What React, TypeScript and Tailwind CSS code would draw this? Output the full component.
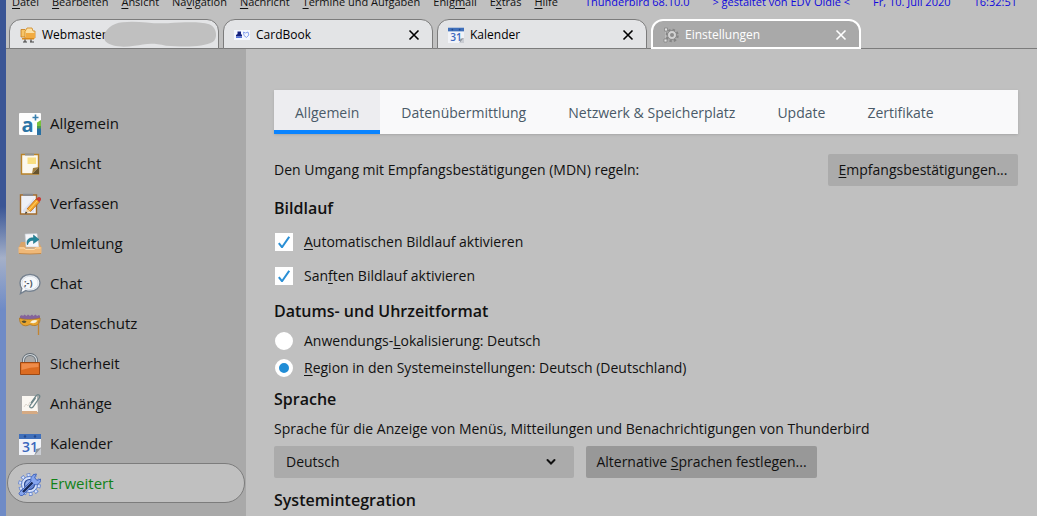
import { useState } from "react";
import type { ReactNode } from "react";

const MailIcon = () => (
  <svg width="16" height="16" viewBox="0 0 16 16">
    <path d="M1 2.500h4l1 1h4V10H1z" fill="#f6c467" stroke="#c77a14" strokeWidth=".8" />
    <path d="M5 4.500 7 1h5l1 3h2v7H5z" fill="#fbe0a4" stroke="#cf8418" strokeWidth=".8" />
    <path d="M6 6h9v5H6z" fill="#f2ab40" />
    <path d="M2 11h12v1.500H2z" fill="#d98a1c" />
    <path d="M5 12.500v2M11 12.500v2M3 15h4M10 15h4" stroke="#444" strokeWidth="1.200" />
  </svg>
);

const CardIcon = () => (
  <svg width="16" height="16" viewBox="0 0 16 16">
    <path d="M0 3h16v10H0z" fill="#f4f7ff" />
    <path d="M2 9.500V8l1.500-1V4.500H7V7l1 1v1.500z" fill="#14207e" />
    <path d="M2 9.500h6V11H2z" fill="#4f6fd8" />
    <path d="m9.500 5 2 1 2.500-1 .8 3-2.300 2.500L10 8.500z" fill="none" stroke="#86a0ee" strokeWidth="1" />
  </svg>
);

const CalendarIcon = ({ size }: { size: number }) => (
  <svg width={size} height={size} viewBox="0 0 22 22">
    <path d="M0 5h22v9l-7 8H0z" fill="#f1f3f8" />
    <path d="M0 1h22v5H0z" fill="#3f6fba" />
    <circle cx="6" cy="3.500" r="1.200" fill="#24498c" />
    <circle cx="16" cy="3.500" r="1.200" fill="#24498c" />
    <text x="3" y="19" fontSize="14" fontWeight="600" fill="#3a67bd" fontFamily="Open Sans, sans-serif">31</text>
    <path d="m22 15-6 7 1-6z" fill="#8d929c" />
    <path d="M22 15v7h-6z" fill="#c9ccd2" />
  </svg>
);

const SmallGearIcon = () => (
  <svg width="16" height="16" viewBox="0 0 16 16">
    <circle cx="9" cy="8.500" r="5.500" fill="none" stroke="#858585" strokeWidth="2.500" strokeDasharray="2.300 2" />
    <circle cx="9" cy="8" r="4.500" fill="#d2d2d2" stroke="#7d7d7d" strokeWidth=".8" />
    <circle cx="9" cy="8" r="2" fill="#8c8c8c" />
    <path d="M1.500 1h3v3h-3zM1 12h3v3H1z" fill="#e2e2e2" stroke="#858585" strokeWidth=".8" />
    <path d="M2.500 5.500v5.500" stroke="#d0d0d0" strokeDasharray="1 1" />
  </svg>
);

const GeneralIcon = () => (
  <svg width="22" height="22" viewBox="0 0 22 22">
    <rect width="22" height="22" rx="1" fill="#fdfdfd" />
    <text x="2.500" y="18.500" fontSize="20" fontWeight="700" fill="#2c74a5" fontFamily="Open Sans, sans-serif">a</text>
    <path d="M16.500 1.500v6M13.500 4.500h6" stroke="#397fae" strokeWidth="1.600" />
    <path d="M18 9.500 22 7v6l-4 2z" fill="#78c13a" />
    <path d="M18 15h4v7h-4z" fill="#2870a3" />
    <path d="M18 13h4v2.500h-4z" fill="#4c9b4c" />
  </svg>
);

const ViewIcon = () => (
  <svg width="22" height="22" viewBox="0 0 22 22">
    <path d="M2.500 1.500h17v19.500h-17z" fill="#fbf8ef" stroke="#b98329" strokeWidth="1.400" />
    <path d="M6 .5h9v2H6z" fill="#8f9396" />
    <path d="M8.500 4.500H17V11H8.500z" fill="#f9df82" />
    <path d="m13 21 1-6 6-1z" fill="#a4803f" />
    <path d="M13 21h7v-7z" fill="#66532d" />
  </svg>
);

const ComposeIcon = () => (
  <svg width="22" height="22" viewBox="0 0 22 22">
    <path d="M1.500 2h16v19h-16z" fill="#eef0f7" stroke="#a36c2c" strokeWidth="1.400" />
    <path d="M4 .8h10v2H4z" fill="#858a94" />
    <path d="M4 17 15 5v14H4z" fill="#dde1f0" />
    <path d="m8 16 9-10 3.500 3-9 9.500z" fill="#f5a62a" stroke="#ba6614" strokeWidth=".8" />
    <path d="m9.500 17.500 9-10" stroke="#ffd46e" strokeWidth="1" />
    <path d="m17 6 2-1.800q1.500-.8 2.600.6t.2 2.400L20.500 9z" fill="#c93b35" />
    <path d="m8 16-2 4.500 5.500-2z" fill="#f2d3a2" />
    <path d="m6.800 18.500-.8 2.200 2.300-.8z" fill="#1d1d1d" />
  </svg>
);

const RedirectIcon = () => (
  <svg width="24" height="22" viewBox="0 0 24 22">
    <path d="M3 9h18l2.500 6H.5z" fill="#d9a468" />
    <path d="m7 1 12-.5 2 13.500H8z" fill="#f5f7fb" stroke="#c2c7cf" strokeWidth=".6" />
    <path d="M9.500 12c-2-5 2-8 6-7V2l5.500 4.500-5.500 4v-3c-3-.5-5 1-6 4.500z" fill="#22859a" stroke="#126577" strokeWidth=".5" />
    <path d="M.5 14h6l1.500 1.500h8l1.500-1.500h6v5.500q0 1.500-1.500 1.500h-20Q.5 21 .5 19.500z" fill="#efb878" />
    <path d="M1 20.500q11 1 22 0" fill="none" stroke="#c48b4d" />
    <path d="M1.500 15h4.600l1.500 1.500h8.800l1.500-1.500h4.600" fill="none" stroke="#ffdba8" />
  </svg>
);

const ChatIcon = () => (
  <svg width="22" height="22" viewBox="0 0 22 22">
    <path d="M11 1.500c5.800 0 10 3.600 10 8.300s-4.200 8.500-10 8.500c-1.500 0-3-.2-4.200-.7L1.500 20.500l1.300-5C1.600 14 1 12 1 9.800 1 5.100 5.200 1.500 11 1.500z" fill="#f7f9fc" stroke="#75818f" strokeWidth="1.400" />
    <path d="M11 3.300c4.600 0 8 2.800 8 6.600s-3.400 6.600-8 6.600-8-2.800-8-6.600 3.400-6.600 8-6.600z" fill="none" stroke="#c6cfda" strokeWidth=".7" />
    <text x="5" y="13" fontSize="9" fontWeight="700" fill="#4c5460" fontFamily="Open Sans, sans-serif">;-)</text>
  </svg>
);

const PrivacyIcon = () => (
  <svg width="22" height="22" viewBox="0 0 22 22">
    <path d="M1 6V3l2-1 1 1 1.500-1.500 2 1.500L9 1.500 11 3l2-1.500L14.500 3l2-1.500L18 3l2-1 1 1v3z" fill="#84639b" />
    <path d="M.5 5c5 2 13 2 20.500 0 .5 5-2.500 8-6.500 7.500-2-.2-3-1-4-.8-1.500.4-3 1.600-5.500.8C1.500 11.500.5 8.500.5 5z" fill="#e8a52f" stroke="#a96e19" strokeWidth=".7" />
    <path d="M2.500 8.500q2.500-2 5 0-2 3-5 0z" fill="#56502f" />
    <path d="M11 9.500q3-3.500 7.500-2-2 4-7.500 2z" fill="#f8f4df" />
    <path d="M19.500 7.500V22" stroke="#c28432" strokeWidth="1.300" />
  </svg>
);

const LockIcon = () => (
  <svg width="22" height="22" viewBox="0 0 22 22">
    <path d="M4.500 12V7.500a6.500 6 0 0 1 13 0V12" fill="none" stroke="#626c75" strokeWidth="3" />
    <path d="M4.500 12V7.500a6.500 6 0 0 1 13 0V12" fill="none" stroke="#d2d8dc" strokeWidth="1.200" />
    <path d="M1.500 9.500h19v12h-19z" fill="#db6b20" stroke="#9d4812" />
    <path d="M2.500 10.500h17V14q-8 0-17 3z" fill="#ee8c4a" />
  </svg>
);

const AttachmentIcon = () => (
  <svg width="22" height="22" viewBox="0 0 22 22">
    <path d="M3 3h15l1 16H3z" fill="#faf7f2" />
    <path d="M3 18h15l1 3H3z" fill="#d5aa83" />
    <path d="m5 14 2-3 2 2 2-4" fill="none" stroke="#ded8d0" />
    <path d="m12 10 5-7q1.500-2 3-1t.2 3L14 14q-1.500 1.500-2.700.6t0-2.400L16.500 5" fill="none" stroke="#6d8589" strokeWidth="1.300" />
  </svg>
);

const AdvancedIcon = () => (
  <svg width="24" height="24" viewBox="0 0 24 24">
    <circle cx="11.500" cy="12.500" r="9.500" fill="none" stroke="#5c7fd0" strokeWidth="3.600" strokeDasharray="3.400 2.570" />
    <circle cx="11.500" cy="12.500" r="9.300" fill="none" stroke="#dbe6fc" strokeWidth="2.400" strokeDasharray="2.200 3.640" strokeDashoffset="-.6" />
    <circle cx="11.500" cy="12.500" r="8" fill="#d6e2fb" stroke="#4369c1" strokeWidth=".8" />
    <circle cx="11.500" cy="12.500" r="5" fill="#8ea9e8" stroke="#2b4a96" strokeWidth="1.200" />
    <path d="M1.500 20.500 13 9c-1-3 1.500-7 5.500-7l-2 3.500 2.500 3L22.500 7c.5 4-3 6.500-6.500 5.500L4.500 23.500q-2 .5-3-.8t0-2.200z" fill="#86a5ee" stroke="#3c60b8" strokeWidth=".9" />
    <path d="M5 20 14.500 10.500" stroke="#172858" strokeWidth="2.400" />
  </svg>
);

// label with its access key underlined
const Label = ({ text, at }: { text: string; at: number }) => (
  <span className="whitespace-nowrap">
    {text.slice(0, at)}
    <span className="underline underline-offset-2">{text[at]}</span>
    {text.slice(at + 1)}
  </span>
);

const CloseIcon = () => (
  <svg width="12" height="12" viewBox="0 0 12 12">
    <path d="m1.500 1.500 9 9m0-9-9 9" stroke="currentColor" strokeWidth="1.600" />
  </svg>
);

const menu = [
  { text: "Datei", at: 0 },
  { text: "Bearbeiten", at: 0 },
  { text: "Ansicht", at: 0 },
  { text: "Navigation", at: 2 },
  { text: "Nachricht", at: 0 },
  { text: "Termine und Aufgaben", at: 0 },
  { text: "Enigmail", at: 4 },
  { text: "Extras", at: 1 },
  { text: "Hilfe", at: 0 },
];

const categories = [
  { text: "Allgemein", icon: <GeneralIcon /> },
  { text: "Ansicht", icon: <ViewIcon /> },
  { text: "Verfassen", icon: <ComposeIcon /> },
  { text: "Umleitung", icon: <RedirectIcon /> },
  { text: "Chat", icon: <ChatIcon /> },
  { text: "Datenschutz", icon: <PrivacyIcon /> },
  { text: "Sicherheit", icon: <LockIcon /> },
  { text: "Anhänge", icon: <AttachmentIcon /> },
  { text: "Kalender", icon: <CalendarIcon size={22} /> },
  { text: "Erweitert", icon: <AdvancedIcon /> },
];

const sections = ["Allgemein", "Datenübermittlung", "Netzwerk & Speicherplatz", "Update", "Zertifikate"];

const WindowTab = ({ text, icon, closable = true }: { text: string; icon: ReactNode; closable?: boolean }) => (
  <div className="relative flex h-[30px] w-[210px] items-center rounded-t-xl border border-[#7c7c7c] bg-[#e3e4e6] pt-0.5 pr-3 pl-2.5 text-black">
    <button className="flex flex-1 items-center gap-1.5">
      {icon}
      {text}
    </button>
    {closable && (
      <button aria-label="Schließen">
        <CloseIcon />
      </button>
    )}
    {!closable && (
      <svg className="absolute top-0 right-px" width="116" height="28" viewBox="0 0 118 28">
        <path d="M5 22C-1 15 8 3 22 2c16-2 28 2 46 1 16-1 32-2 42 1 8 3 9 14 4 18-10 6-32 5-48 4-16-4-22-1-32 0-12 2-23 1-29-4z" fill="#c0c0c0" />
      </svg>
    )}
  </div>
);

const CheckRow = ({ text, at }: { text: string; at: number }) => (
  <label className="flex h-[34px] items-center gap-2.5">
    <span className="relative flex">
      <input type="checkbox" defaultChecked className="peer m-px size-[18px] appearance-none bg-white" />
      <svg className="pointer-events-none absolute top-1 left-1 hidden peer-checked:block" width="12" height="12" viewBox="0 0 12 12">
        <path d="m.8 7.200 3.200 4L11.200.8" fill="none" stroke="#2a8fd5" strokeWidth="2" />
      </svg>
    </span>
    <Label text={text} at={at} />
  </label>
);

const RadioRow = ({ text, at, checked = false }: { text: string; at: number; checked?: boolean }) => (
  <label className="flex h-[27px] items-center gap-2.5">
    <input
      type="radio"
      name="dateformat"
      defaultChecked={checked}
      className="m-px size-[18px] appearance-none rounded-full border-4 border-white bg-white checked:bg-[#218dd6]"
    />
    <Label text={text} at={at} />
  </label>
);

export default function App() {
  const [section, setSection] = useState("Allgemein");
  const [category, setCategory] = useState("Erweitert");

  return (
    <div className="flex h-screen overflow-hidden bg-[#c0c0c0] font-['Open_Sans',sans-serif] text-sm text-[#111111]">
      {/* strip of desktop left of the window */}
      <div className="w-1.5 shrink-0 bg-linear-to-b from-[#3a5595] from-40% via-[#a5b0c8] to-[#6f8bc6] to-60%" />

      <div className="flex min-w-0 flex-1 flex-col">
        <header className="shrink-0 text-xs">
          <nav className="flex h-2.5 items-end gap-[13px] overflow-hidden pr-5 pl-1.5 text-[11px] leading-4">
            {menu.map((item) => (
              <button key={item.text}>
                <Label text={item.text} at={item.at} />
              </button>
            ))}
            <div className="flex flex-1 justify-between pl-3.5 whitespace-nowrap text-[#1008dc]">
              <span>Thunderbird 68.10.0</span>
              <span>&gt; gestaltet von EDV Oldie &lt;</span>
              <span>Fr, 10. Juli 2020</span>
              <span>16:32:51</span>
            </div>
          </nav>

          <div className="flex gap-1 border-b border-[#7c7c7c] pt-[9px] pl-[3px]">
            <div className="-mb-px flex gap-1">
              <WindowTab text="Webmaster" icon={<MailIcon />} closable={false} />
              <WindowTab text="CardBook" icon={<CardIcon />} />
              <WindowTab text="Kalender" icon={<CalendarIcon size={16} />} />
              <div className="flex h-[30px] w-[210px] items-center rounded-t-xl border-2 border-white bg-[#a9a9a9] pt-0.5 pr-3 pl-2.5 text-white">
                <button className="flex flex-1 items-center gap-1.5">
                  <SmallGearIcon />
                  Einstellungen
                </button>
                <button aria-label="Schließen">
                  <CloseIcon />
                </button>
              </div>
            </div>
          </div>
        </header>

        <div className="flex min-h-0 flex-1">
          <aside className="w-60 shrink-0 bg-[#a9a9a9] px-px pt-[54px]">
            {categories.map((item) => (
              <button
                key={item.text}
                onClick={() => setCategory(item.text)}
                className={`flex h-10 w-full items-center gap-2 rounded-full border pt-0.5 pl-2.5 text-[15px] ${
                  category === item.text ? "border-[#7c7c7c] bg-[#c0c0c0] text-[#118218]" : "border-transparent"
                }`}
              >
                <span className="flex w-6 justify-center">{item.icon}</span>
                {item.text}
              </button>
            ))}
          </aside>

          <main className="min-w-0 flex-1 pt-[41px] pr-[19px] pl-7">
            <div className="flex h-11 bg-[#f9f9fa] text-[#4a5a68] shadow-sm">
              {sections.map((item) => (
                <button
                  key={item}
                  onClick={() => setSection(item)}
                  className={`border-b-4 px-[21px] pt-1.5 whitespace-nowrap ${
                    section === item ? "border-[#0a84ff] bg-[#ededf0]" : "border-transparent"
                  }`}
                >
                  {item}
                </button>
              ))}
            </div>

            <div className="mt-5 flex h-8 items-center justify-between">
              <p>Den Umgang mit Empfangsbestätigungen (MDN) regeln:</p>
              <button className="h-8 w-[190px] rounded-xs bg-[#ababab]">
                <Label text="Empfangsbestätigungen..." at={0} />
              </button>
            </div>

            <h2 className="mt-2.5 text-base leading-6 font-semibold">Bildlauf</h2>
            <div className="mt-[5px]">
              <CheckRow text="Automatischen Bildlauf aktivieren" at={0} />
              <CheckRow text="Sanften Bildlauf aktivieren" at={3} />
            </div>

            <h2 className="mt-1.5 text-base leading-6 font-semibold">Datums- und Uhrzeitformat</h2>
            <div className="mt-1">
              <RadioRow text="Anwendungs-Lokalisierung: Deutsch" at={11} />
              <RadioRow text="Region in den Systemeinstellungen: Deutsch (Deutschland)" at={0} checked />
            </div>

            <h2 className="mt-1.5 text-base leading-6 font-semibold">Sprache</h2>
            <p className="mt-1.5 leading-6">
              <label htmlFor="language">Sprache für die Anzeige von Menüs, Mitteilungen und Benachrichtigungen von Thunderbird</label>
            </p>
            <div className="mt-[5px] flex gap-3">
              <div className="relative w-[300px]">
                <select id="language" className="h-8 w-full appearance-none rounded-xs bg-[#ababab] px-3">
                  <option>Deutsch</option>
                </select>
                <svg className="pointer-events-none absolute top-3 right-[18px]" width="10" height="8" viewBox="0 0 10 8">
                  <path d="m1.500 2 3.500 3.500L8.500 2" fill="none" stroke="#111" strokeWidth="2" strokeLinecap="round" />
                </svg>
              </div>
              <button className="h-8 w-[231px] rounded-xs bg-[#989898]">
                <Label text="Alternative Sprachen festlegen..." at={12} />
              </button>
            </div>

            <h2 className="mt-2.5 text-base leading-6 font-semibold">Systemintegration</h2>
          </main>
        </div>
      </div>
    </div>
  );
}
